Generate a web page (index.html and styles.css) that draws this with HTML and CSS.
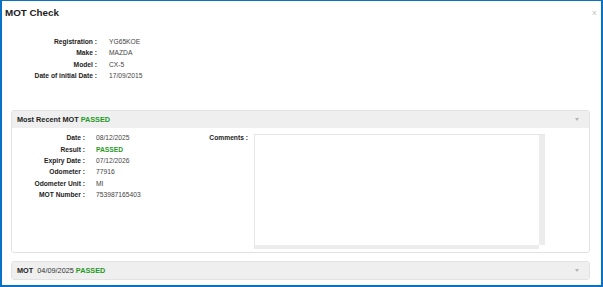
FILE: index.html
```html
<!DOCTYPE html>
<html lang="en">
<head>
    <meta charset="UTF-8">
    <meta name="viewport" content="width=device-width, initial-scale=1.0">
    <title>MOT Check</title>
    <link rel="stylesheet" href="styles.css">
</head>
<body>
    <div class="modal">
        <div class="modal-header">
            <div class="modal-title">MOT Check</div>
            <span class="modal-close">&times;</span>
        </div>
        <div class="modal-body">
            <div class="vehicle-info">
                <div class="info-label">Registration :</div>
                <div class="info-value">YG65KOE</div>
                <div class="info-label">Make :</div>
                <div class="info-value">MAZDA</div>
                <div class="info-label">Model :</div>
                <div class="info-value">CX-5</div>
                <div class="info-label">Date of initial Date :</div>
                <div class="info-value">17/09/2015</div>
            </div>

            <div class="panel">
                <div class="panel-header">
                    <span>Most Recent MOT <span class="passed">PASSED</span></span>
                    <span class="caret"></span>
                </div>
                <div class="panel-body">
                    <div class="mot-details">
                        <div class="mot-label">Date :</div>
                        <div class="mot-value">08/12/2025</div>
                        <div class="mot-label">Result :</div>
                        <div class="mot-value passed">PASSED</div>
                        <div class="mot-label">Expiry Date :</div>
                        <div class="mot-value">07/12/2026</div>
                        <div class="mot-label">Odometer :</div>
                        <div class="mot-value">77916</div>
                        <div class="mot-label">Odometer Unit :</div>
                        <div class="mot-value">MI</div>
                        <div class="mot-label">MOT Number :</div>
                        <div class="mot-value">753987165403</div>
                    </div>
                    <div class="comments-label">Comments :</div>
                    <div class="comments-box"></div>
                </div>
            </div>

            <div class="panel">
                <div class="panel-header">
                    <span>MOT &nbsp;<span class="mot-date">04/09/2025</span> <span class="passed">PASSED</span></span>
                    <span class="caret"></span>
                </div>
            </div>
        </div>
    </div>
</body>
</html>
```

FILE: styles.css
```css
html, body {
    margin: 0;
    height: 100%;
}
body {
    font-family: "Liberation Sans", Arial, sans-serif;
    background-color: #fff;
    color: #222;
}
.modal {
    box-sizing: border-box;
    height: 100vh;
    border: 2px solid #0a72c4;
    border-top-width: 1px;
}
.modal-header {
    display: flex;
    justify-content: space-between;
    align-items: center;
    padding: 6px 4px 0 3px;
}
.modal-title {
    font-size: 9.8px;
    font-weight: bold;
    line-height: 12px;
    color: #222;
}
.modal-close {
    font-size: 9px;
    line-height: 12px;
    color: #c4c4c4;
}
.modal-body {
    padding: 0 11px 0 9px;
}
.vehicle-info {
    display: grid;
    grid-template-columns: 86px auto;
    column-gap: 12px;
    margin-top: 17px;
    margin-bottom: 29px;
    font-size: 6.7px;
    line-height: 11.3px;
}
.info-label, .mot-label, .comments-label {
    text-align: right;
    font-weight: bold;
    color: #222;
}
.info-value, .mot-value {
    color: #444;
}
.passed {
    color: #1f9a1f;
    font-weight: bold;
}
.panel {
    border: 1px solid #e2e2e2;
    border-radius: 3px;
    margin-bottom: 8px;
}
.panel-header {
    display: flex;
    justify-content: space-between;
    align-items: center;
    height: 17px;
    padding: 0 10px 0 5px;
    background-color: #efefef;
    font-size: 7.3px;
    font-weight: bold;
    color: #222;
}
.panel:first-of-type .panel-header {
    border-bottom: 1px solid #e2e2e2;
}
.mot-date {
    font-weight: normal;
    color: #333;
}
.caret {
    width: 0;
    height: 0;
    border-left: 2.5px solid transparent;
    border-right: 2.5px solid transparent;
    border-top: 3px solid #b4b4b4;
}
.panel-body {
    display: flex;
    align-items: flex-start;
    padding: 4px 0 3px 0;
    font-size: 6.7px;
    line-height: 11.4px;
}
.mot-details {
    display: grid;
    grid-template-columns: 73px auto;
    column-gap: 11px;
    width: 196px;
}
.comments-label {
    width: 40px;
    margin-right: 6px;
}
.comments-box {
    position: relative;
    box-sizing: border-box;
    width: 291px;
    height: 115px;
    margin-top: 2px;
    border: 1px solid #e6e6e6;
    border-right: 6px solid #ececec;
    border-bottom: 4px solid #ececec;
}
.comments-box::after {
    content: "";
    position: absolute;
    right: -6px;
    bottom: -4px;
    width: 6px;
    height: 4px;
    background-color: #fff;
}
```
